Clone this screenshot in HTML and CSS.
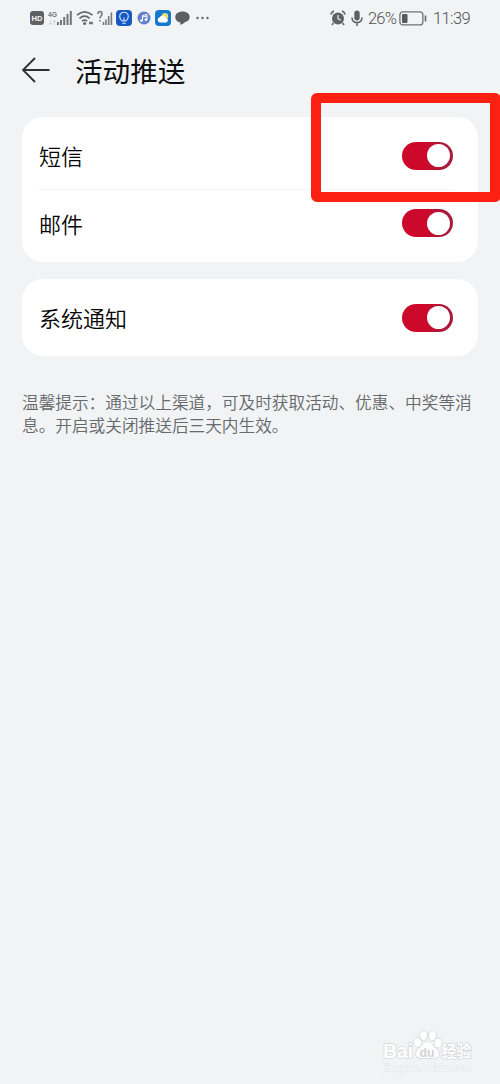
FILE: index.html
```html
<!DOCTYPE html>
<html lang="zh-CN">
<head>
<meta charset="utf-8">
<title>活动推送</title>
<link rel="stylesheet" href="styles.css">
</head>
<body>
<div class="screen">
  <div class="status">
    <div class="status-side status-left">
      <svg class="ic-hd" width="14" height="14" viewBox="0 0 14 14"><rect width="14" height="14" rx="3" fill="#5e6062"/><text x="7" y="10" text-anchor="middle" class="hd-text">HD</text></svg>
      <svg class="ic-4g" width="25" height="16" viewBox="0 0 25 16"><text x="0" y="6.5" textLength="9" lengthAdjust="spacingAndGlyphs" class="net-text">4G</text><path d="M2.500 10v5M1 13l1.500 2L4 13M6.500 15v-5M5 12l1.500-2L8 12" fill="none" stroke="#d2d4d6" stroke-width="1"/><path d="M10 12v3M13 10v5M16.200 7v8M19.500 4v11M22.800 1v14" stroke="#737577" stroke-width="2"/></svg>
      <svg class="ic-wifi" width="18" height="16" viewBox="0 0 18 16"><path d="M1 5.200Q8.500-1.400 16.500 5.200M3.500 8.300q5-4.200 10.200 0M6 11.100q2.600-2 5.200 0" fill="none" stroke="#646668" stroke-width="1.700"/><circle cx="8.600" cy="13.600" r="1.500" fill="#646668"/><path d="M13 13h4" fill="none" stroke="#777" stroke-width="2.500"/></svg>
      <svg class="ic-sim2" width="16" height="16" viewBox="0 0 16 16"><path d="M1 4q0-2.500 2-2.500T5 4q0 1.300-1.200 2.200Q3 7 3 8.500M3 10v1.500M6.500 12v3M9 9.500V15M11.700 6v9M14.400 2.500V15" fill="none" stroke="#77797b" stroke-width="1.600"/></svg>
      <svg class="ic-bulb" width="16" height="16" viewBox="0 0 16 16"><rect width="16" height="16" rx="4" fill="#1659c4"/><path d="M6.300 11Q3.700 9 3.700 6.500a4.300 4.300 0 0 1 8.600 0q0 2.500-2.600 4.500zM6.300 13.200h3.400M8 10.500V7.500" fill="none" stroke="#d9eaff" stroke-width="1.100"/></svg>
      <svg class="ic-music" width="14" height="14" viewBox="0 0 14 14"><circle cx="7" cy="7" r="6.500" fill="#6280cb"/><path d="M5.500 9.500V4.500l4.500-1V8.500M5.500 6l4.500-1" fill="none" stroke="#fff" stroke-width="1"/><circle cx="4.500" cy="9.600" r="1.400" fill="#fff"/><circle cx="9" cy="8.700" r="1.400" fill="#fff"/></svg>
      <svg class="ic-weather" width="16" height="16" viewBox="0 0 16 16"><rect width="16" height="16" rx="4" fill="#1678d0"/><circle cx="10" cy="6.200" r="3.200" fill="#e7dc6b"/><path d="M5 12.500a2.700 2.700 0 0 1-.3-5.300 3.500 3.500 0 0 1 6.300.7 2.400 2.400 0 0 1 .3 4.600z" fill="#fff"/></svg>
      <svg class="ic-chat" width="15" height="14" viewBox="0 0 15 14"><path d="M7.500.5C3.400.5.3 2.800.3 6s2.500 5.100 5.200 5.500L5 13.700q3-.3 4.700-2.400c3-.7 5-2.600 5-5.300 0-3.200-3.100-5.500-7.200-5.500z" fill="#5c5e60"/></svg>
      <svg class="ic-more" width="13" height="4" viewBox="0 0 13 4"><g fill="#646668"><circle cx="1.500" cy="2" r="1.200"/><circle cx="6.500" cy="2" r="1.200"/><circle cx="11.500" cy="2" r="1.200"/></g></svg>
    </div>
    <div class="status-side status-right">
      <svg width="16" height="16" viewBox="0 0 16 16"><circle cx="8" cy="8.500" r="6" fill="#5f6163"/><path d="M.8 4.500Q1.500 2 4 1M15.200 4.500Q14.500 2 12 1M3.500 13l-1.600 2M12.500 13l1.600 2" fill="none" stroke="#5f6163" stroke-width="1.500"/><path d="M8 5v3.700l2.800 1.600" fill="none" stroke="#f1f3f5" stroke-width="1.200"/></svg>
      <svg class="ic-mic" width="12" height="17" viewBox="0 0 12 17"><rect x="3.300" y=".5" width="5.400" height="10" rx="2.700" fill="#5f6163"/><path d="M1 7.500q0 5 5 5t5-5M6 12.500V16" fill="none" stroke="#5f6163" stroke-width="1.500"/></svg>
      <span class="percent">26%</span>
      <svg class="ic-battery" width="28" height="15" viewBox="0 0 28 15"><rect x=".9" y=".9" width="23" height="13" rx="3" fill="none" stroke="#707274" stroke-width="1.300"/><rect x="3" y="3" width="5.500" height="9" rx="1" fill="#58595b"/><path d="M26.500 4.500v6" stroke="#66686a" stroke-width="1.600"/></svg>
      <span class="clock">11:39</span>
    </div>
  </div>

  <header class="header">
    <svg width="28" height="26" viewBox="0 0 28 26"><path d="M27.500 13H1M13 1L1 13l12 12" fill="none" stroke="#2d2e30" stroke-width="1.800"/></svg>
    <h1 class="title">活动推送</h1>
  </header>

  <main class="content">
    <section class="card card-double">
      <div class="row row-first"><span class="label">短信</span><span class="switch"><i class="knob"></i></span></div>
      <div class="row row-second"><span class="label">邮件</span><span class="switch"><i class="knob"></i></span></div>
    </section>
    <section class="card card-single">
      <div class="row"><span class="label">系统通知</span><span class="switch"><i class="knob"></i></span></div>
    </section>
    <p class="tip">温馨提示：通过以上渠道，可及时获取活动、优惠、中奖等消<br>息。开启或关闭推送后三天内生效。</p>
  </main>

  <div class="highlight"></div>
  <svg class="watermark" width="100" height="52" viewBox="0 0 100 52">
    <text x="5" y="29.5" textLength="30" lengthAdjust="spacingAndGlyphs" class="wm-latin">Bai</text>
    <text x="63.500" y="28.500" textLength="30" lengthAdjust="spacingAndGlyphs" class="wm-cn">经验</text>
    <g class="wm-shape">
      <ellipse cx="39.500" cy="14.500" rx="3.500" ry="4.500" transform="rotate(-15 39.500 14.500)"/>
      <ellipse cx="45.500" cy="7.500" rx="3.600" ry="4.700"/>
      <ellipse cx="54.500" cy="7.500" rx="3.600" ry="4.700" transform="rotate(8 54.500 7.500)"/>
      <ellipse cx="60" cy="15" rx="3.400" ry="4.500" transform="rotate(15 60 15)"/>
      <path d="M49.500 14c-4 0-5 3.500-8 6-5 4-4.500 9.500 1 10h14c5.500-.5 6-6 1-10-3-2.500-4-6-8-6z"/>
    </g>
    <text x="41.500" y="28.500" textLength="15" lengthAdjust="spacingAndGlyphs" class="wm-du">du</text>
    <text x="6" y="42.500" textLength="88" lengthAdjust="spacingAndGlyphs" class="wm-url">jingyan.baidu.com</text>
  </svg>
</div>
</body>
</html>
```
FILE: styles.css
```css
* { box-sizing: border-box; }
body {
  margin: 0;
  background: #f1f3f5;
  font-family: "Noto Sans CJK SC", "Noto Sans", sans-serif;
}
.screen {
  position: relative;
  width: 500px;
  height: 1084px;
  overflow: hidden;
  background: #f1f3f5;
}
.status {
  display: flex;
  justify-content: space-between;
  height: 36px;
  padding: 0 30px;
}
.status svg { display: block; flex: none; }
.status-side { display: flex; align-items: center; }
.ic-4g { margin-left: 4px; }
.ic-wifi { margin-left: 3px; }
.ic-sim2 { margin-left: 3px; }
.ic-bulb { margin-left: 3px; }
.ic-music { margin-left: 5px; }
.ic-weather { margin-left: 4px; }
.ic-chat { margin-left: 4px; }
.ic-more { margin-left: 6px; }
.hd-text { font: 700 7.500px "Liberation Sans", sans-serif; fill: #f4f5f6; }
.net-text { font: 700 8px "Liberation Sans", sans-serif; fill: #77797b; }
.ic-mic { margin-left: 5px; }
.percent, .clock {
  padding-top: 1px;
  font: 300 16.500px/20px Roboto, sans-serif;
  color: #505254;
  white-space: nowrap;
}
.percent { width: 28px; margin-left: 5px; letter-spacing: -.8px; }
.ic-battery { margin-left: 3px; }
.clock { width: 37px; margin-left: 6px; letter-spacing: -.6px; }
.header {
  display: flex;
  align-items: center;
  height: 69px;
  padding: 0 22px 1px;
}
.title {
  margin: 0 0 0 25px;
  font-size: 27.600px;
  line-height: 40px;
  font-weight: 400;
  color: #0c0d0e;
}
.content { padding: 12px 22px 0; }
.card {
  padding: 0 25px 0 17px;
  border-radius: 21px;
  background: #fff;
}
.card-double { height: 145px; }
.card-single { height: 77px; margin-top: 17px; }
.row {
  display: flex;
  align-items: center;
  justify-content: space-between;
  height: 77px;
  font-size: 22px;
  line-height: 32px;
  color: #060607;
}
.label { padding-bottom: 1px; font-weight: 350; }
.row-first { height: 73px; padding-top: 5px; border-bottom: 1px solid #f5f5f6; }
.row-second { height: 66px; }
.switch {
  display: flex;
  justify-content: flex-end;
  align-items: center;
  width: 51px;
  height: 28px;
  padding-right: 3px;
  border-radius: 14px;
  background: linear-gradient(90deg, #cd092b 45%, #a81b3c 85%);
}
.knob { width: 23px; height: 23px; border-radius: 50%; background: #fff; }
.tip {
  margin: 35px 0 0;
  font-size: 16.670px;
  line-height: 22.500px;
  font-weight: 350;
  color: #66686a;
  white-space: nowrap;
}
.highlight {
  position: absolute;
  left: 311px;
  top: 93px;
  width: 190px;
  height: 109px;
  border: 10px solid #fb2012;
  border-right-width: 11px;
  border-radius: 6px;
}
.watermark { position: absolute; left: 378px; top: 1028px; }
.wm-shape, .wm-latin, .wm-cn {
  fill: #fff;
  stroke: #d5d7d9;
  stroke-width: 1.400px;
  paint-order: stroke;
}
.wm-latin { font: 700 20.500px "Liberation Sans", sans-serif; }
.wm-du { font: 700 13px "Liberation Sans", sans-serif; fill: #d1d3d5; }
.wm-cn { font: 700 15.500px/1 "Noto Sans CJK SC", sans-serif; }
.wm-url {
  font: 9px "Liberation Sans", sans-serif;
  fill: #fbfcfc;
  stroke: #e1e3e5;
  stroke-width: .8px;
  paint-order: stroke;
}
```
